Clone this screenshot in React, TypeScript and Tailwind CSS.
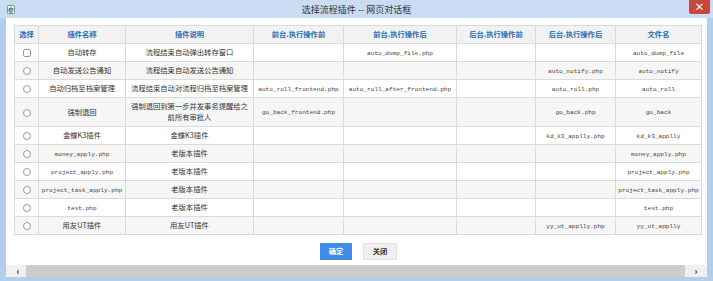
import React from "react";

type Row = {
  name: string;
  nameMono?: boolean;
  desc: string;
  fb?: string;
  fa?: string;
  bb?: string;
  ba?: string;
  file: string;
  tall?: boolean;
};

const rows: Row[] = [
  { name: "自动转存", desc: "流程结束自动弹出转存窗口", fa: "auto_dump_file.php", file: "auto_dump_file" },
  { name: "自动发送公告通知", desc: "流程结束自动发送公告通知", ba: "auto_notify.php", file: "auto_notify" },
  {
    name: "自动归档至档案管理",
    desc: "流程结束自动对流程归档至档案管理",
    fb: "auto_roll_frontend.php",
    fa: "auto_roll_after_frontend.php",
    ba: "auto_roll.php",
    file: "auto_roll",
  },
  {
    name: "强制退回",
    desc: "强制退回到第一步并发事务提醒给之前所有审批人",
    fb: "go_back_frontend.php",
    ba: "go_back.php",
    file: "go_back",
    tall: true,
  },
  { name: "金蝶K3插件", desc: "金蝶K3插件", ba: "kd_k3_applly.php", file: "kd_k3_applly" },
  { name: "money_apply.php", nameMono: true, desc: "老版本插件", file: "money_apply.php" },
  { name: "project_apply.php", nameMono: true, desc: "老版本插件", file: "project_apply.php" },
  { name: "project_task_apply.php", nameMono: true, desc: "老版本插件", file: "project_task_apply.php" },
  { name: "test.php", nameMono: true, desc: "老版本插件", file: "test.php" },
  { name: "用友UT插件", desc: "用友UT插件", ba: "yy_ut_applly.php", file: "yy_ut_applly" },
];

const headers = ["选择", "插件名称", "插件说明", "前台.执行操作前", "前台.执行操作后", "后台.执行操作前", "后台.执行操作后", "文件名"];
const widths = ["w-[24px]", "w-[87px]", "w-[128px]", "w-[90px]", "w-[113px]", "w-[79px]", "w-[80px]", "w-[86px]"];

const Mono = ({ text }: { text?: string }) =>
  text ? <span className="font-['Liberation_Mono',monospace] text-[6.1px] text-[#444]">{text}</span> : null;

const App = () => {
  return (
    <div className="w-[713px] h-[281px] bg-[#b3cdec] flex flex-col overflow-hidden font-['Noto_Sans_CJK_SC','Noto_Sans',sans-serif]">
      {/* Title bar */}
      <div className="h-[18px] grid grid-cols-[1fr_auto_1fr] items-center bg-[#c9dcf3]">
        <div className="pl-[7px] flex items-center">
          <svg width="8" height="9" viewBox="0 0 8 9">
            <rect x="0.5" y="0.5" width="7" height="8" rx="1" fill="#f4f8ee" stroke="#7aa35a" />
            <path d="M2 5h4a2 2 0 1 0-0.6 1.5" fill="none" stroke="#2f78c8" strokeWidth="1.2" />
          </svg>
        </div>
        <div className="text-[9px] text-[#333] leading-none">选择流程插件 -- 网页对话框</div>
        <div className="justify-self-end self-start pr-[3px]">
          <div className="w-[21px] h-[14px] bg-[#c8463c] rounded-b-[2px] flex items-center justify-center text-white text-[10px] font-bold leading-none">
            ×
          </div>
        </div>
      </div>

      {/* Body */}
      <div className="flex-1 mx-[6px] bg-white flex flex-col">
        <div className="pt-[7px] pl-[8px]">
          <table className="table-fixed border-collapse w-[687px] border border-[#d0d0d0] text-[7.3px] leading-[11px] text-[#333]">
            <thead>
              <tr className="h-[18px] bg-[#f2f2f2]">
                {headers.map((h, i) => (
                  <th key={h} className={`${widths[i]} border border-[#dadada] text-center font-bold text-[#2b6cb3] p-0`}>
                    {h}
                  </th>
                ))}
              </tr>
            </thead>
            <tbody>
              {rows.map((r, i) => (
                <tr key={r.file} className={`${r.tall ? "h-[29px]" : "h-[18px]"} ${i % 2 === 1 ? "bg-[#f6f6f6]" : "bg-white"}`}>
                  <td className="border border-[#dadada] text-center p-0">
                    <span
                      className={`inline-block w-[8px] h-[8px] border border-[#9a9a9a] bg-white align-middle ${
                        i === 0 ? "rounded-[2px]" : "rounded-full"
                      }`}
                    />
                  </td>
                  <td className="border border-[#dadada] text-center p-0">
                    {r.nameMono ? <Mono text={r.name} /> : r.name}
                  </td>
                  <td className="border border-[#dadada] text-center px-[2px] py-0">{r.desc}</td>
                  <td className="border border-[#dadada] text-center p-0">
                    <Mono text={r.fb} />
                  </td>
                  <td className="border border-[#dadada] text-center p-0">
                    <Mono text={r.fa} />
                  </td>
                  <td className="border border-[#dadada] text-center p-0">
                    <Mono text={r.bb} />
                  </td>
                  <td className="border border-[#dadada] text-center p-0">
                    <Mono text={r.ba} />
                  </td>
                  <td className="border border-[#dadada] text-center p-0">
                    <Mono text={r.file} />
                  </td>
                </tr>
              ))}
            </tbody>
          </table>
        </div>

        {/* Buttons */}
        <div className="mt-[8px] flex justify-center gap-[11px] pl-[4px]">
          <button className="w-[32px] h-[17px] bg-[#3f8ce8] text-white text-[7.3px] font-bold leading-none">确定</button>
          <button className="w-[34px] h-[17px] bg-[#f0f0f0] border border-[#e0e0e0] text-[#333] text-[7.3px] font-bold leading-none">
            关闭
          </button>
        </div>

        <div className="flex-1" />

        {/* Horizontal scrollbar */}
        <div className="h-[12px] flex items-stretch">
          <div className="w-[20px] bg-[#f0f0f0] flex items-center justify-center text-[#222] text-[9px] font-bold leading-none pl-[4px]">
            ‹
          </div>
          <div className="flex-1 bg-[#cdcdcd]" />
          <div className="w-[22px] bg-[#f0f0f0] flex items-center justify-center text-[#222] text-[9px] font-bold leading-none">
            ›
          </div>
        </div>
      </div>
      <div className="h-[4px]" />
    </div>
  );
};

export default App;
